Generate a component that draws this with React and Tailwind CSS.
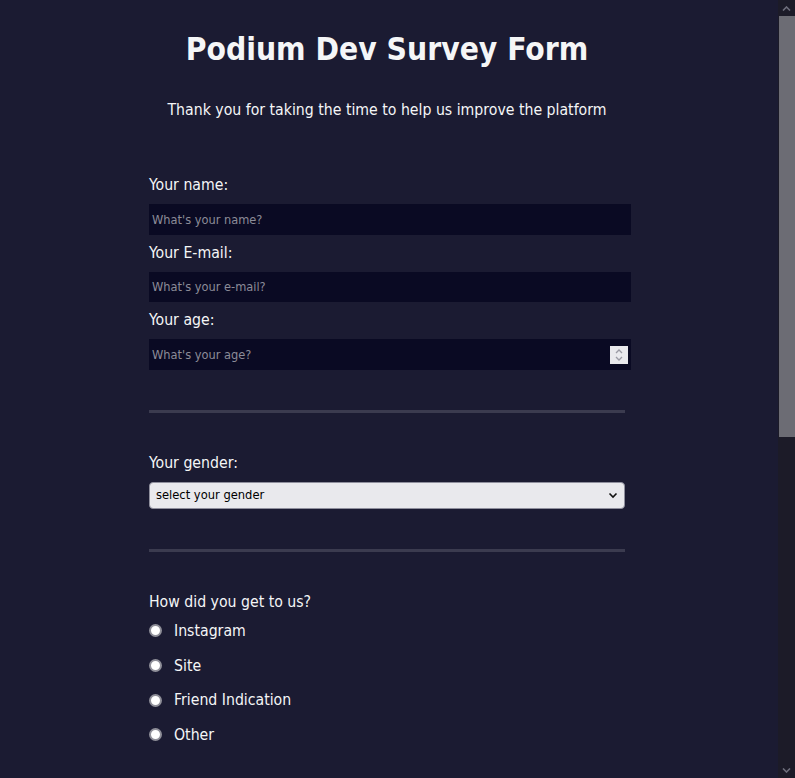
import React from "react";

function Field({ label, placeholder, type = "text", spin = false, first = false }) {
  return (
    <div className={first ? "" : "mt-[8px]"}>
      <label className="block leading-[20px] mb-[9px]">{label}</label>
      <div className="relative">
        <input
          type={type}
          placeholder={placeholder}
          className="block w-full h-[30.5px] bg-[#0a0a23] px-[3px] text-[12.7px] text-white placeholder:text-[#8c8c98] outline-none [appearance:textfield] [&::-webkit-inner-spin-button]:appearance-none [&::-webkit-outer-spin-button]:appearance-none"
        />
        {spin && (
          <div className="absolute right-[3px] top-[7px] w-[18px] h-[18px] bg-[#e9e9ed] flex flex-col items-center justify-center gap-[2px]">
            <svg width="8" height="5" viewBox="0 0 8 5" fill="none">
              <path d="M1 4 L4 1 L7 4" stroke="#9a9aa4" strokeWidth="1.3" />
            </svg>
            <svg width="8" height="5" viewBox="0 0 8 5" fill="none">
              <path d="M1 1 L4 4 L7 1" stroke="#9a9aa4" strokeWidth="1.3" />
            </svg>
          </div>
        )}
      </div>
    </div>
  );
}

function Radio({ label }) {
  return (
    <label className="flex items-center h-[34.67px]">
      <input
        type="radio"
        name="source"
        className="m-0 w-[13px] h-[13px] appearance-none rounded-full bg-white border-[2px] border-[#8f8f99] shrink-0"
      />
      <span className="ml-[12px]">{label}</span>
    </label>
  );
}

function Scrollbar() {
  return (
    <div className="w-[17px] h-full flex flex-col bg-[#1c1b28] shrink-0">
      <div className="h-[16px] flex items-center justify-center">
        <svg width="9" height="5" viewBox="0 0 9 5" fill="none">
          <path d="M1 4.5 L4.5 1 L8 4.5" stroke="#6e6e7c" strokeWidth="1.6" />
        </svg>
      </div>
      <div className="h-[421px] ml-[1px] bg-[#6c6c74]" />
      <div className="flex-1" />
      <div className="h-[16px] flex items-center justify-center">
        <svg width="9" height="5" viewBox="0 0 9 5" fill="none">
          <path d="M1 0.5 L4.5 4 L8 0.5" stroke="#6e6e7c" strokeWidth="1.6" />
        </svg>
      </div>
    </div>
  );
}

export default function App() {
  return (
    <div className="h-[778px] flex overflow-hidden bg-[#1b1b32]">
      <div className="flex-1 pl-[2px] text-[#f5f6f7] text-[15.7px] font-['DejaVu_Sans_Condensed','DejaVu_Sans',sans-serif]">
        <div className="w-[482px] mx-auto">
          <div className="w-[476px]">
            <h1 className="pt-[30px] text-center font-bold text-[31.5px] leading-[38px]">
              Podium Dev Survey Form
            </h1>
            <p className="mt-[32px] text-center leading-[20px]">
              Thank you for taking the time to help us improve the platform
            </p>
          </div>

          <form className="mt-[55px]">
            <Field first label="Your name:" placeholder="What's your name?" />
            <Field label="Your E-mail:" placeholder="What's your e-mail?" type="email" />
            <Field label="Your age:" placeholder="What's your age?" type="number" spin />

            <hr className="w-[476px] mt-[40px] border-0 h-[3px] bg-[#3b3b4f]" />

            <div className="mt-[40px] w-[476px]">
              <label className="block leading-[20px] mb-[9px]">Your gender:</label>
              <div className="relative">
                <select className="block w-full h-[27px] appearance-none rounded-[4px] border border-[#8f8f9d] bg-[#e9e9ed] pl-[6px] text-[12.8px] text-black outline-none">
                  <option>select your gender</option>
                  <option>Male</option>
                  <option>Female</option>
                  <option>Other</option>
                </select>
                <svg
                  className="absolute right-[7px] top-[10px] pointer-events-none"
                  width="10"
                  height="7"
                  viewBox="0 0 10 7"
                  fill="none"
                >
                  <path d="M1.5 1.5 L5 5 L8.5 1.5" stroke="#111" strokeWidth="1.6" />
                </svg>
              </div>
            </div>

            <hr className="w-[476px] mt-[40px] border-0 h-[3px] bg-[#3b3b4f]" />

            <div className="mt-[40px]">
              <p className="leading-[20px] mb-[2px]">How did you get to us?</p>
              <Radio label="Instagram" />
              <Radio label="Site" />
              <Radio label="Friend Indication" />
              <Radio label="Other" />
            </div>
          </form>
        </div>
      </div>
      <Scrollbar />
    </div>
  );
}
